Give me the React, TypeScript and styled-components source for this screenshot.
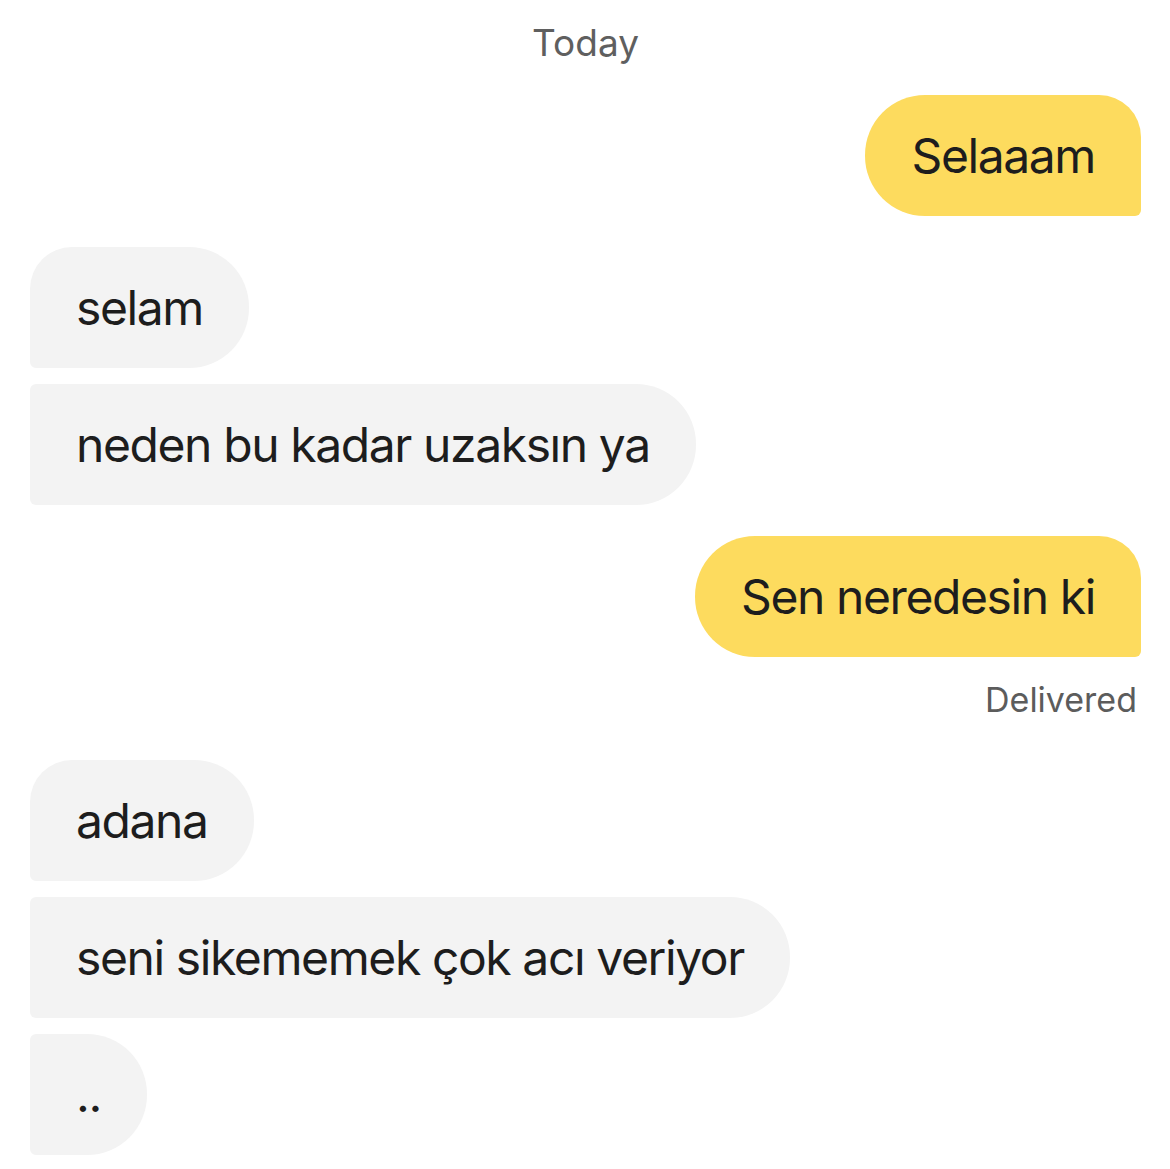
import styled, { createGlobalStyle, css } from "styled-components";

const GlobalStyle = createGlobalStyle`
  html, body {
    margin: 0;
    padding: 0;
    background: #ffffff;
  }
  body {
    font-family: Inter, "Noto Sans", "Liberation Sans", sans-serif;
    -webkit-font-smoothing: antialiased;
  }
`;

const Thread = styled.div`
  display: flex;
  flex-direction: column;
  gap: 31px;
  padding: 21px 29px 0 30px;
  width: 1170px;
  box-sizing: border-box;
`;

const DayLabel = styled.div`
  text-align: center;
  font-size: 37px;
  line-height: 43px;
  color: #5f5f5f;
`;

const Group = styled.div<{ $mine?: boolean }>`
  display: flex;
  flex-direction: column;
  gap: 16px;
  align-items: ${(p) => (p.$mine ? "flex-end" : "flex-start")};
`;

type Pos = "single" | "first" | "middle" | "last";

const BIG = 60;
const START = 42;
const SMALL = 6;

const Bubble = styled.div<{ $mine?: boolean; $pos: Pos }>`
  box-sizing: border-box;
  height: 121px;
  padding: 0 46px;
  display: flex;
  align-items: center;
  font-size: 48px;
  letter-spacing: -1.4px;
  line-height: 1;
  color: #1d1d1d;
  white-space: nowrap;
  ${(p) =>
    p.$mine
      ? css`
          background: #fddb5e;
          border-radius: ${BIG}px ${START}px ${SMALL}px ${BIG}px;
        `
      : css`
          background: #f3f3f3;
          border-radius: ${p.$pos === "single" || p.$pos === "first" ? START : SMALL}px
            ${BIG}px ${BIG}px ${SMALL}px;
        `}
`;

const Status = styled.div`
  font-size: 34px;
  line-height: 40px;
  color: #5c5c5c;
  padding: 7px 4px 9px 0;
`;

type Msg = { text: string; pos: Pos };

const received1: Msg[] = [
  { text: "selam", pos: "first" },
  { text: "neden bu kadar uzaksın ya", pos: "last" },
];

const received2: Msg[] = [
  { text: "adana", pos: "first" },
  { text: "seni sikememek çok acı veriyor", pos: "middle" },
  { text: "..", pos: "last" },
];

export default function App() {
  return (
    <>
      <GlobalStyle />
      <Thread>
        <DayLabel>Today</DayLabel>
        <Group $mine>
          <Bubble $mine $pos="single">Selaaam</Bubble>
        </Group>
        <Group>
          {received1.map((m, i) => (
            <Bubble key={i} $pos={m.pos}>
              {m.text}
            </Bubble>
          ))}
        </Group>
        <Group $mine>
          <Bubble $mine $pos="single">Sen neredesin ki</Bubble>
          <Status>Delivered</Status>
        </Group>
        <Group>
          {received2.map((m, i) => (
            <Bubble key={i} $pos={m.pos}>
              {m.text}
            </Bubble>
          ))}
        </Group>
      </Thread>
    </>
  );
}
